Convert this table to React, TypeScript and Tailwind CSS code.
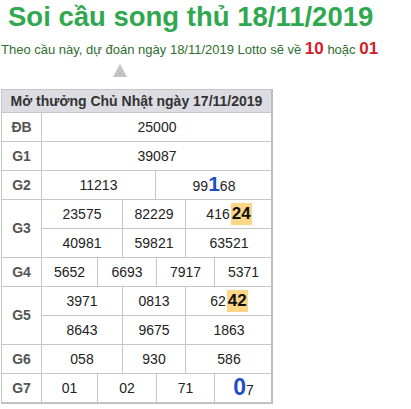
import React from "react";

const B = "border-[#c6c6c6]";

function Cell({ w, children, last }: { w: number; children: React.ReactNode; last?: boolean }) {
  return (
    <div
      className={`flex h-[29px] items-center justify-center border-b ${B} text-[14px] text-[#222] ${last ? "" : "border-r"}`}
      style={{ width: w }}
    >
      {children}
    </div>
  );
}

function Row({ label, widths, values }: { label: string; widths: number[]; values: React.ReactNode[][] }) {
  return (
    <div className="flex">
      <div
        className={`flex w-[40px] shrink-0 items-center justify-center border-r border-b ${B} text-[14px] font-bold text-[#555]`}
        style={{ height: 29 * values.length }}
      >
        {label}
      </div>
      <div className="flex flex-col">
        {values.map((r, i) => (
          <div key={i} className="flex">
            {r.map((v, j) => (
              <Cell key={j} w={widths[j]} last={j === r.length - 1}>
                {v}
              </Cell>
            ))}
          </div>
        ))}
      </div>
    </div>
  );
}

const Hi = ({ children }: { children: React.ReactNode }) => (
  <span className="ml-[1px] bg-[#fbd684] px-[1px] text-[17px] font-bold leading-[22px] text-[#111]">{children}</span>
);

export default function App() {
  const w3 = [81, 63, 86];
  const w4 = [56, 59, 58, 57];
  return (
    <div className="h-[409px] w-[411px] bg-white" style={{ fontFamily: '"Liberation Sans", Arial, sans-serif' }}>
      <div className="pl-[8px] pt-[1px] text-[27.5px] font-bold leading-[32px] text-[#2fa84f]">Soi cầu song thủ 18/11/2019</div>
      <div className="mt-[6px] pl-[1px] text-[13px] leading-[20px] text-[#2f6e2f]">
        Theo cầu này, dự đoán ngày 18/11/2019 Lotto sẽ về{" "}
        <span className="text-[17px] font-bold text-[#d0212a]">10</span> hoặc{" "}
        <span className="text-[17px] font-bold text-[#d0212a]">01</span>
      </div>
      <div className="ml-[113px] mt-[4px] h-0 w-0 border-x-[7px] border-b-[13px] border-x-transparent border-b-[#c3c3c3]" />
      <div className={`ml-[1px] mt-[12px] w-[272px] border-l border-t ${B} border-r-2 border-b border-r-[#bdbdbd] border-b-[#bdbdbd]`}>
        <div className={`flex h-[23px] items-center justify-center border-b ${B} bg-[#dcdce2] text-[14px] font-bold text-[#333]`}>
          Mở thưởng Chủ Nhật ngày 17/11/2019
        </div>
        <Row label="ĐB" widths={[230]} values={[["25000"]]} />
        <Row label="G1" widths={[230]} values={[["39087"]]} />
        <Row
          label="G2"
          widths={[114, 116]}
          values={[
            [
              "11213",
              <span key="a" className="flex items-baseline">
                99<span className="text-[21px] font-bold leading-none text-[#1d4fc4]">1</span>68
              </span>,
            ],
          ]}
        />
        <Row
          label="G3"
          widths={w3}
          values={[
            ["23575", "82229", <span key="b" className="flex items-center">416<Hi>24</Hi></span>],
            ["40981", "59821", "63521"],
          ]}
        />
        <Row label="G4" widths={w4} values={[["5652", "6693", "7917", "5371"]]} />
        <Row
          label="G5"
          widths={w3}
          values={[
            ["3971", "0813", <span key="c" className="flex items-center">62<Hi>42</Hi></span>],
            ["8643", "9675", "1863"],
          ]}
        />
        <Row label="G6" widths={w3} values={[["058", "930", "586"]]} />
        <Row
          label="G7"
          widths={w4}
          values={[
            [
              "01",
              "02",
              "71",
              <span key="d" className="flex items-baseline">
                <span className="text-[23px] font-bold leading-none text-[#1d4fc4]">0</span>7
              </span>,
            ],
          ]}
        />
      </div>
    </div>
  );
}
